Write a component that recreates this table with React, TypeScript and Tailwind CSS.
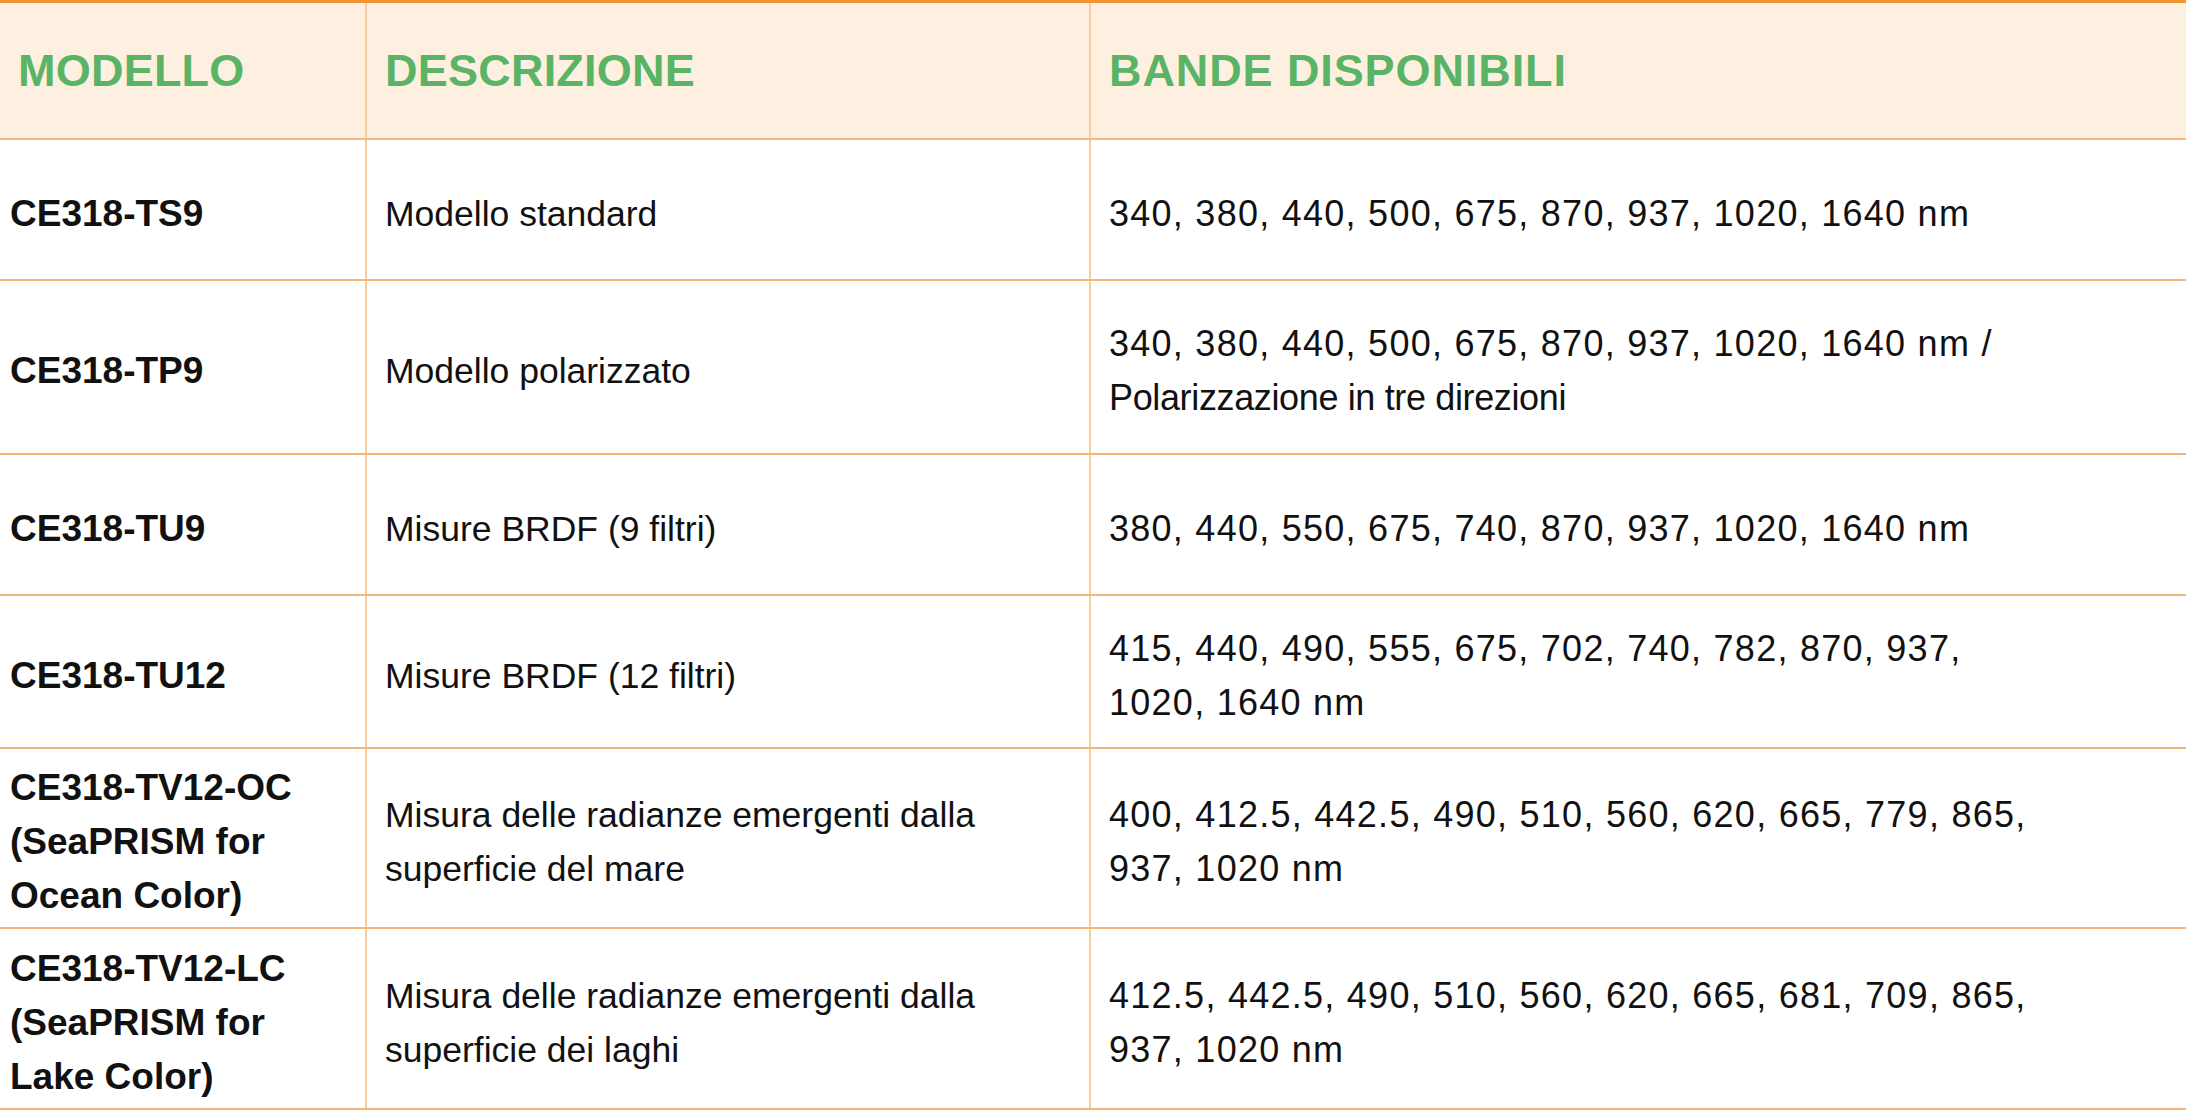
type Row = {
  model: string[];
  desc: string[];
  bands: string[];
  height: string;
};

const ROWS: Row[] = [
  {
    model: ["CE318-TS9"],
    desc: ["Modello standard"],
    bands: ["340, 380, 440, 500, 675, 870, 937, 1020, 1640 nm"],
    height: "h-[141px]",
  },
  {
    model: ["CE318-TP9"],
    desc: ["Modello polarizzato"],
    bands: ["340, 380, 440, 500, 675, 870, 937, 1020, 1640 nm /", "Polarizzazione in tre direzioni"],
    height: "h-[174px]",
  },
  {
    model: ["CE318-TU9"],
    desc: ["Misure BRDF (9 filtri)"],
    bands: ["380, 440, 550, 675, 740, 870, 937, 1020, 1640 nm"],
    height: "h-[141px]",
  },
  {
    model: ["CE318-TU12"],
    desc: ["Misure BRDF (12 filtri)"],
    bands: ["415, 440, 490, 555, 675, 702, 740, 782, 870, 937,", "1020, 1640 nm"],
    height: "h-[153px]",
  },
  {
    model: ["CE318-TV12-OC", "(SeaPRISM for", "Ocean Color)"],
    desc: ["Misura delle radianze emergenti dalla", "superficie del mare"],
    bands: ["400, 412.5, 442.5, 490, 510, 560, 620, 665, 779, 865,", "937, 1020 nm"],
    height: "h-[180px]",
  },
  {
    model: ["CE318-TV12-LC", "(SeaPRISM for", "Lake Color)"],
    desc: ["Misura delle radianze emergenti dalla", "superficie dei laghi"],
    bands: ["412.5, 442.5, 490, 510, 560, 620, 665, 681, 709, 865,", "937, 1020 nm"],
    height: "h-[181px]",
  },
];

// number lines get a bit of tracking, plain words don't
function isWords(line: string) {
  return /^[A-Za-z]/.test(line);
}

function Lines({ lines, tracked }: { lines: string[]; tracked?: boolean }) {
  return (
    <div className="pt-2">
      {lines.map((l, i) => (
        <span
          key={i}
          className={`block whitespace-nowrap ${
            tracked ? (isWords(l) ? "tracking-[-0.01em]" : "tracking-[0.035em]") : ""
          }`}
        >
          {l}
        </span>
      ))}
    </div>
  );
}

export default function App() {
  return (
    <div
      className="w-full min-h-screen bg-white text-[#111111]"
      style={{ fontFamily: '"Liberation Sans", Arial, sans-serif' }}
    >
      {/* ── Header ── */}
      <div className="grid grid-cols-[367px_724px_1fr] h-[140px] bg-[#fdf0e0] border-t-[3px] border-t-[#f39434] border-b-2 border-b-[#f7b97c]">
        <div className="flex items-center pl-[18px] border-r-2 border-r-[#f9cb9c]">
          <span className="text-[45px] font-bold text-[#5bb466] tracking-[0.005em]">MODELLO</span>
        </div>
        <div className="flex items-center pl-[18px] border-r-2 border-r-[#f9cb9c]">
          <span className="text-[45px] font-bold text-[#5bb466] tracking-[0.005em]">DESCRIZIONE</span>
        </div>
        <div className="flex items-center pl-[18px]">
          <span className="text-[45px] font-bold text-[#5bb466] tracking-[0.02em]">BANDE DISPONIBILI</span>
        </div>
      </div>

      {/* ── Body rows ── */}
      {ROWS.map((row) => (
        <div
          key={row.model[0]}
          className={`grid grid-cols-[367px_724px_1fr] border-b-2 border-b-[#f5b57a] ${row.height}`}
        >
          <div className="flex items-center pl-[10px] border-r-2 border-r-[#f9cb9c] text-[37px] font-bold leading-[54px]">
            <Lines lines={row.model} />
          </div>
          <div className="flex items-center pl-[18px] border-r-2 border-r-[#f9cb9c] text-[35.5px] leading-[54px]">
            <Lines lines={row.desc} />
          </div>
          <div className="flex items-center pl-[18px] text-[36px] leading-[54px]">
            <Lines lines={row.bands} tracked />
          </div>
        </div>
      ))}
    </div>
  );
}
